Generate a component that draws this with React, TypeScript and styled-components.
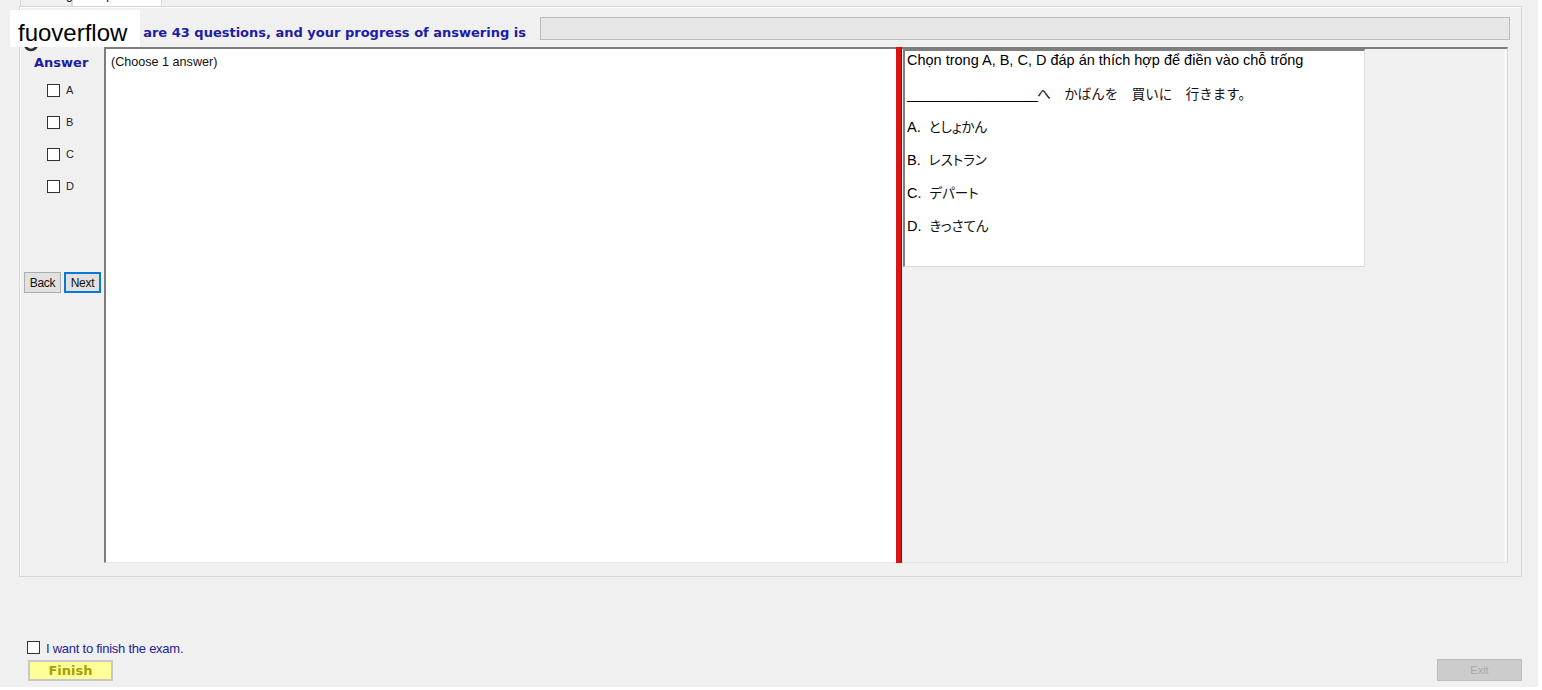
import React from "react";
import styled, { createGlobalStyle } from "styled-components";

const GlobalStyle = createGlobalStyle`
  html, body {
    margin: 0;
    padding: 0;
    background: #ffffff;
  }
  body {
    font-family: "Liberation Sans", Arial, sans-serif;
  }
`;

const SANS = `"Liberation Sans", Arial, sans-serif`;
const WIDE = `"DejaVu Sans", Verdana, sans-serif`;
const JP = `"Liberation Sans", "Noto Sans CJK JP", sans-serif`;

const Window = styled.div`
  position: relative;
  width: 1538px;
  height: 687px;
  background: #f0f0f0;
  display: flex;
  flex-direction: column;
  overflow: hidden;
  font-family: ${SANS};
`;

const TabStrip = styled.div`
  height: 6px;
  padding-left: 20px;
  display: flex;
  align-items: flex-end;
  overflow: hidden;
`;

const Tab = styled.div<{ $active?: boolean }>`
  height: 20px;
  flex: none;
  width: ${(p) => (p.$active ? 90 : 52)}px;
  box-sizing: border-box;
  border: 1px solid #d9d9d9;
  border-bottom: none;
  background: ${(p) => (p.$active ? "#ffffff" : "#f0f0f0")};
  font-size: 12px;
  line-height: 17px;
  padding-left: ${(p) => (p.$active ? 8 : 7)}px;
  color: #000;
  white-space: nowrap;
`;

const TabPanel = styled.div`
  margin-left: 19px;
  width: 1503px;
  height: 571px;
  box-sizing: border-box;
  border: 1px solid #d6d6d6;
  box-shadow: inset 1px 1px 0 #ffffff;
  padding: 0 0 0 4px;
  display: flex;
  flex-direction: column;
`;

const Header = styled.div`
  height: 40px;
  box-sizing: border-box;
  padding: 10px 11px 0 0;
  display: flex;
  justify-content: flex-end;
  align-items: flex-start;
  gap: 14px;
`;

const HeaderLabel = styled.div`
  font-family: ${WIDE};
  font-size: 13px;
  font-weight: bold;
  color: #1c1ca6;
  line-height: 23px;
  padding-top: 4px;
  white-space: nowrap;
`;

const ProgressBar = styled.div`
  width: 970px;
  height: 23px;
  box-sizing: border-box;
  background: #e6e6e6;
  border: 1px solid #bcbcbc;
`;

const MainRow = styled.div`
  display: flex;
  width: 1484px;
  height: 516px;
`;

const AnswerColumn = styled.div`
  width: 80px;
  flex: none;
  display: flex;
  flex-direction: column;
  padding-top: 8px;
  box-sizing: border-box;
`;

const AnswerTitle = styled.div`
  font-family: ${WIDE};
  font-size: 13px;
  font-weight: bold;
  color: #1c1ca6;
  line-height: 16px;
  padding-left: 10px;
  margin-bottom: 3px;
`;

const OptionRow = styled.label`
  height: 32px;
  display: flex;
  align-items: center;
  padding-left: 23px;
  gap: 6px;
  font-size: 11px;
  color: #222;
`;

const Box = styled.span`
  width: 13px;
  height: 13px;
  box-sizing: border-box;
  border: 1px solid #333;
  background: #fff;
  flex: none;
`;

const NavButtons = styled.div`
  display: flex;
  gap: 3px;
  margin-top: 70px;
`;

const NavButton = styled.button<{ $focused?: boolean }>`
  width: 37px;
  height: 21px;
  padding: 0;
  box-sizing: border-box;
  font-family: ${SANS};
  font-size: 12px;
  letter-spacing: -0.3px;
  color: #111;
  background: #e1e1e1;
  border: ${(p) => (p.$focused ? "2px solid #0a78d7" : "1px solid #adadad")};
`;

const QuestionBox = styled.div`
  width: 792px;
  flex: none;
  box-sizing: border-box;
  background: #fff;
  border-top: 2px solid #7d7d7d;
  border-left: 2px solid #7d7d7d;
  border-bottom: 1px solid #e8e8e8;
  padding: 6px 0 0 5px;
  font-size: 12.6px;
  line-height: 15px;
  color: #111;
`;

const Splitter = styled.div`
  width: 6px;
  flex: none;
  background: #d81414;
  border-right: 1px solid #8a1010;
  box-sizing: border-box;
`;

const ContentPane = styled.div`
  flex: 1;
  box-sizing: border-box;
  border-top: 2px solid #7d7d7d;
  border-right: 1px solid #d8d8d8;
  border-bottom: 1px solid #e4e4e4;
  box-shadow: inset -3px 0 0 #f7f7f7;
`;

const Card = styled.div`
  width: 462px;
  height: 218px;
  box-sizing: border-box;
  margin-left: 1px;
  background: #fff;
  border-top: 2px solid #808080;
  border-left: 2px solid #808080;
  border-right: 1px solid #e0e0e0;
  border-bottom: 1px solid #dadada;
  padding-left: 2px;
  display: flex;
  flex-direction: column;
  gap: 15px;
`;

const Line = styled.div`
  height: 18px;
  line-height: 18px;
  font-size: 14.5px;
  color: #000;
  font-family: ${JP};
  white-space: nowrap;
`;

const Kana = styled.span<{ $proportional?: boolean }>`
  font-family: "Noto Sans CJK JP", sans-serif;
  font-size: 13.5px;
  font-weight: 400;
  color: #111;
  font-feature-settings: ${(p) => (p.$proportional ? '"palt"' : "normal")};
`;

const Letter = styled.span`
  margin-right: 8px;
`;

const Blank = styled.span`
  letter-spacing: -0.4px;
`;

const Footer = styled.div`
  flex: 1;
  display: flex;
  justify-content: space-between;
  align-items: flex-end;
  padding: 0 16px 6px 27px;
`;

const FinishGroup = styled.div`
  display: flex;
  flex-direction: column;
  gap: 5px;
`;

const ConfirmRow = styled.label`
  display: flex;
  align-items: center;
  gap: 6px;
  height: 14px;
  font-size: 13px;
  color: #24249c;
  letter-spacing: -0.25px;
  & > ${Box} {
    margin-top: -2px;
  }
`;

const FinishButton = styled.button`
  width: 85px;
  height: 21px;
  margin-left: 1px;
  padding: 0;
  font-family: ${WIDE};
  font-size: 13px;
  font-weight: bold;
  color: #a2a200;
  background: #ffff99;
  border: 2px solid #c8c8c8;
  box-sizing: border-box;
`;

const ExitButton = styled.button`
  width: 85px;
  height: 22px;
  padding: 0;
  font-family: ${SANS};
  font-size: 11px;
  color: #a8a8a8;
  background: #cccccc;
  border: 1px solid #bdbdbd;
  box-sizing: border-box;
`;

const Watermark = styled.div`
  position: absolute;
  left: 10px;
  top: 10px;
  width: 130px;
  height: 37px;
  background: #fff;
  box-sizing: border-box;
  padding-left: 8px;
  font-family: ${SANS};
  font-size: 24px;
  line-height: 45px;
  color: #000;
  z-index: 2;
`;

const Badge = styled.svg`
  position: absolute;
  left: 23px;
  top: 37px;
  z-index: 1;
`;

const options = ["A", "B", "C", "D"];

const choices = [
  { key: "A.", text: "としょかん" },
  { key: "B.", text: "レストラン" },
  { key: "C.", text: "デパート" },
  { key: "D.", text: "きっさてん" },
];

export default function App() {
  return (
    <>
      <GlobalStyle />
      <Window>
        <TabStrip>
          <Tab>Reading</Tab>
          <Tab $active>Multiple Choices</Tab>
        </TabStrip>
        <TabPanel>
          <Header>
            <HeaderLabel>There are 43 questions, and your progress of answering is</HeaderLabel>
            <ProgressBar />
          </Header>
          <MainRow>
            <AnswerColumn>
              <AnswerTitle>Answer</AnswerTitle>
              {options.map((o) => (
                <OptionRow key={o}>
                  <Box />
                  {o}
                </OptionRow>
              ))}
              <NavButtons>
                <NavButton>Back</NavButton>
                <NavButton $focused>Next</NavButton>
              </NavButtons>
            </AnswerColumn>
            <QuestionBox>(Choose 1 answer)</QuestionBox>
            <Splitter />
            <ContentPane>
              <Card>
                <Line>Chọn trong A, B, C, D đáp án thích hợp để điền vào chỗ trống</Line>
                <Line>
                  <Blank>_________________</Blank>
                  <Kana>へ　かばんを　買いに　行きます。</Kana>
                </Line>
                {choices.map((c) => (
                  <Line key={c.key}>
                    <Letter>{c.key}</Letter>
                    <Kana $proportional>{c.text}</Kana>
                  </Line>
                ))}
              </Card>
            </ContentPane>
          </MainRow>
        </TabPanel>
        <Footer>
          <FinishGroup>
            <ConfirmRow>
              <Box />
              I want to finish the exam.
            </ConfirmRow>
            <FinishButton>Finish</FinishButton>
          </FinishGroup>
          <ExitButton>Exit</ExitButton>
        </Footer>
        <Badge width="16" height="16" viewBox="0 0 16 16">
          <circle cx="8" cy="7" r="6" fill="none" stroke="#2a2a2a" strokeWidth="2.5" />
        </Badge>
        <Watermark>fuoverflow</Watermark>
      </Window>
    </>
  );
}
